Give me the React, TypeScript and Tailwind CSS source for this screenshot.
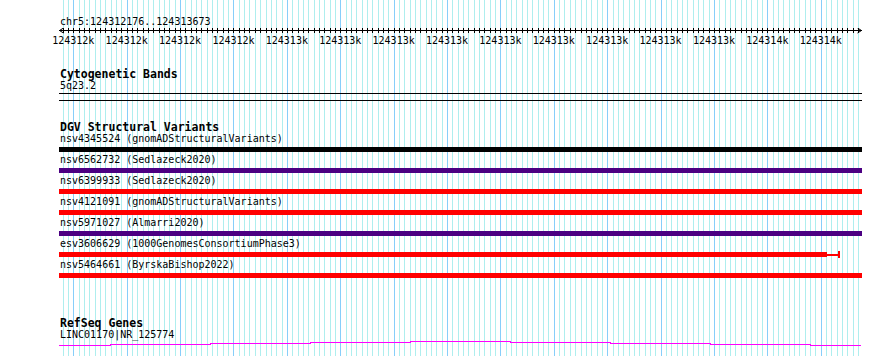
import React from 'react';

const LEFT = 59;
const TRACK_W = 803;

// genomic coordinate -> page x
const px = (bp: number) => 73.3 + (bp - 124312200) * 0.5339;

const minors: number[] = [];
for (let bp = 124312180; bp <= 124313670; bp += 10) minors.push(bp);

const majors: { bp: number; label: string }[] = [];
for (let bp = 124312200; bp <= 124313600; bp += 100) {
  const k = bp / 1000;
  const fl = Math.floor(k);
  // round half to even, like the browser this came from
  const r = k - fl === 0.5 ? (fl % 2 === 0 ? fl : fl + 1) : Math.round(k);
  majors.push({ bp, label: `${r}k` });
}

const variants = [
  { name: 'nsv4345524 (gnomADStructuralVariants)', color: 'bg-black' },
  { name: 'nsv6562732 (Sedlazeck2020)', color: 'bg-[#4b0082]' },
  { name: 'nsv6399933 (Sedlazeck2020)', color: 'bg-[#ff0000]' },
  { name: 'nsv4121091 (gnomADStructuralVariants)', color: 'bg-[#ff0000]' },
  { name: 'nsv5971027 (Almarri2020)', color: 'bg-[#4b0082]' },
  { name: 'esv3606629 (1000GenomesConsortiumPhase3)', color: 'bg-[#ff0000]', short: true },
  { name: 'nsv5464661 (ByrskaBishop2022)', color: 'bg-[#ff0000]' },
];

const Grid = () => (
  <svg className="absolute inset-0 pointer-events-none" width={890} height={356} shapeRendering="crispEdges">
    {minors.map((bp) => {
      const x = Math.round(px(bp)) + 0.5;
      const major = bp % 100 === 0;
      return (
        <line key={bp} x1={x} x2={x} y1={0} y2={356} stroke={major ? '#87cefa' : '#aeeeee'} strokeWidth={1} />
      );
    })}
  </svg>
);

// ruler is drawn in page coordinates so the first label can hang left of the track
const Ruler = () => {
  const a = LEFT;
  const b = LEFT + TRACK_W;
  return (
    <svg width={890} height={20} className="-ml-[59px] block" shapeRendering="crispEdges">
      <line x1={a} x2={b} y1={2.5} y2={2.5} stroke="#000" />
      <path d={`M${a + 0.5} 2.5 L${a + 4.5} 0 M${a + 0.5} 2.5 L${a + 4.5} 5`} stroke="#000" fill="none" shapeRendering="auto" />
      <path d={`M${b - 0.5} 2.5 L${b - 4.5} 0 M${b - 0.5} 2.5 L${b - 4.5} 5`} stroke="#000" fill="none" shapeRendering="auto" />
      {minors.map((bp) => {
        const x = Math.round(px(bp)) + 0.5;
        return <line key={bp} x1={x} x2={x} y1={0} y2={5} stroke="#000" />;
      })}
      {majors.map((m) => (
        <text
          key={m.bp}
          x={px(m.bp)}
          y={16}
          textAnchor="middle"
          fontFamily="'DejaVu Sans Mono', monospace"
          fontSize={10}
          fill="#000"
        >
          {m.label}
        </text>
      ))}
    </svg>
  );
};

// the gene line bows gently upward across the view
const steps = [
  [0, 51, 4],
  [51, 151, 3],
  [151, 251, 2],
  [251, 351, 1],
  [351, 451, 0],
  [451, 551, 1],
  [551, 651, 2],
  [651, 751, 3],
  [751, 802, 4],
];

const GeneLine = () => (
  <svg width={TRACK_W} height={6} className="block" shapeRendering="crispEdges">
    <path
      d={steps.map(([a, b, y], i) => `${i === 0 ? 'M' : 'L'}${a} ${y + 0.5} L${b} ${y + 0.5}`).join(' ')}
      stroke="#ff00ff"
      strokeWidth={1}
      fill="none"
    />
  </svg>
);

const Title = ({ children, className = '' }: { children: React.ReactNode; className?: string }) => (
  <div className={`pl-px text-[11.5px] leading-[12px] font-bold text-black ${className}`}>{children}</div>
);

const Label = ({ children }: { children: React.ReactNode }) => (
  <div className="pl-px text-[10px] leading-[12px] text-black whitespace-nowrap">{children}</div>
);

export default function App() {
  return (
    <div className="relative w-[890px] h-[356px] overflow-hidden bg-white font-['DejaVu_Sans_Mono',monospace]">
      <Grid />
      <div className="relative flex flex-col pl-[59px]">
        <div className="mt-[16px]">
          <Label>chr5:124312176..124313673</Label>
        </div>
        <Ruler />

        <Title className="mt-[20px]">Cytogenetic Bands</Title>
        <Label>5q23.2</Label>
        <div className="mt-px h-px w-[803px] bg-black" />
        <div className="mt-[6px] h-px w-[803px] bg-black" />

        <Title className="mt-[20px]">DGV Structural Variants</Title>
        {variants.map((v) => (
          <div key={v.name} className="flex flex-col">
            <Label>{v.name}</Label>
            {v.short ? (
              <div className="mt-[2px] mb-[2px] flex h-[5px] w-[803px] items-center">
                <div className={`h-[5px] w-[768px] ${v.color}`} />
                <div className="h-[2px] w-[11px] bg-[#ff0000]" />
                <div className="h-[7px] w-[2px] bg-[#ff0000]" />
              </div>
            ) : (
              <div className={`mt-[2px] mb-[2px] h-[5px] w-[803px] ${v.color}`} />
            )}
          </div>
        ))}

        <Title className="mt-[37px]">RefSeq Genes</Title>
        <Label>LINC01170|NR_125774</Label>
        <GeneLine />
      </div>
    </div>
  );
}
